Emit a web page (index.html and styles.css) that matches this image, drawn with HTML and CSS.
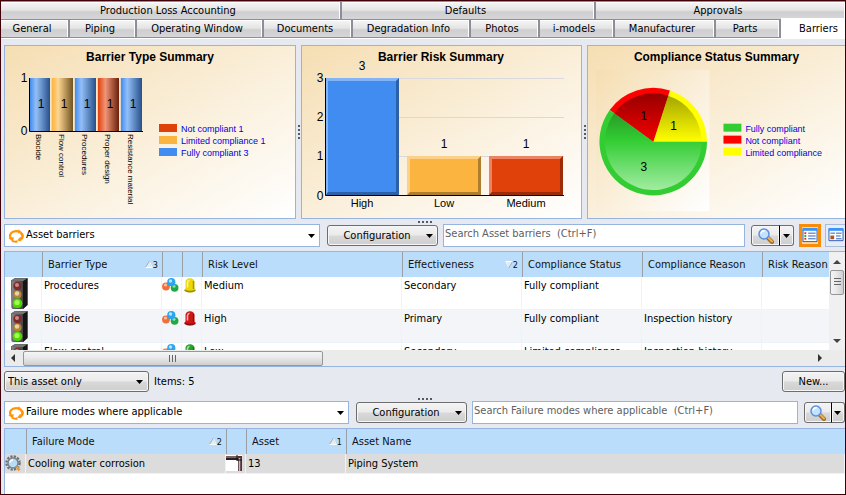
FILE: index.html
```html
<!DOCTYPE html>
<html lang="en">
<head>
<meta charset="utf-8">
<title>Asset barriers</title>
<link rel="stylesheet" href="styles.css">
</head>
<body>
<svg class="defs" aria-hidden="true">
  <defs>
    <linearGradient id="g-blue"><stop offset="0" stop-color="#418cf0"/><stop offset=".3" stop-color="#93bff7"/><stop offset="1" stop-color="#27508a"/></linearGradient>
    <linearGradient id="g-gold"><stop offset="0" stop-color="#fcb441"/><stop offset=".3" stop-color="#fdd593"/><stop offset="1" stop-color="#70531f"/></linearGradient>
    <linearGradient id="g-red"><stop offset="0" stop-color="#e0400a"/><stop offset=".35" stop-color="#f09577"/><stop offset="1" stop-color="#6a2008"/></linearGradient>
    <linearGradient id="g-area" x2="1" y2="1"><stop offset="0" stop-color="#f5deb3"/><stop offset="1" stop-color="#fff"/></linearGradient>
    <linearGradient id="p-red" x2="0" y2="1"><stop offset="0" stop-color="#960000"/><stop offset="1" stop-color="#f60000"/></linearGradient>
    <linearGradient id="p-yellow" x2="0" y2="1"><stop offset="0" stop-color="#a5a500"/><stop offset="1" stop-color="#ff0"/></linearGradient>
    <linearGradient id="p-green" x2="0" y2="1"><stop offset="0" stop-color="#289b28"/><stop offset=".35" stop-color="#32cd32"/><stop offset="1" stop-color="#a2eca2"/></linearGradient>
    <linearGradient id="g-case"><stop offset="0" stop-color="#8a8a8a"/><stop offset=".5" stop-color="#606060"/><stop offset="1" stop-color="#444"/></linearGradient>
    <symbol id="i-refresh" viewBox="0 0 16 14">
      <path d="M3 9.500C.500 5.500 3.500 2.200 8 2.200c1.500 0 2.500.300 3.500 1" fill="none" stroke="#ff9408" stroke-width="2.200"/>
      <path d="M12.200 3.500C15.800 6 15 9 12.500 10" fill="none" stroke="#ff9408" stroke-width="2.600"/>
      <path d="M13.500 12.500 9.200 11.500 12.300 7.800z" fill="#ff9408"/>
      <path d="M9.500 12.200C7.500 13 5.500 12.600 3.800 11.500" fill="none" stroke="#ff9408" stroke-width="2"/>
      <path d="M.300 9 5.800 8.300 5 12.800z" fill="#ff9408"/>
      <path d="M10.500 0v4.500l3-1.500z" fill="#ff9408"/>
    </symbol>
    <symbol id="i-arrow" viewBox="0 0 7 4"><path d="M0 0h7L3.500 4z"/></symbol>
    <symbol id="i-lens" viewBox="0 0 16 16">
      <path d="M9.500 9.500 14 14" stroke="#9b6a25" stroke-width="4" stroke-linecap="round"/>
      <path d="M9.800 9.300 14 13.500" stroke="#f0b050" stroke-width="2" stroke-linecap="round"/>
      <circle cx="6" cy="6" r="5" fill="#c3e2fc" stroke="#5b8fe0" stroke-width="1.500"/>
      <path d="M3 5.500A3.500 3.500 0 0 1 7 2.800" fill="none" stroke="#fff" stroke-width="1.500"/>
    </symbol>
    <symbol id="i-traffic" viewBox="0 0 17 31">
      <path d="M0 2.500 4 0h12.500v27L12 31H2L.500 30z" fill="#4a4a4a"/>
      <path d="M.500 3h11.500v27.500H1.500z" fill="url(#g-case)"/>
      <path d="M12 3 16.500 0v27L12 31z" fill="#151515"/>
      <path d="M0 2.800 4 .300h12.500L12 3z" fill="#777"/>
      <circle cx="6.500" cy="8" r="4.200" fill="#7e2a2a"/><circle cx="6" cy="7" r="2" fill="#c98a8a"/>
      <circle cx="6.500" cy="16.500" r="4" fill="#b3843c"/><circle cx="6" cy="15.500" r="2.200" fill="#ecd49c"/>
      <circle cx="6.500" cy="25.300" r="4.800" fill="#4fd800"/><circle cx="6" cy="24.500" r="2.600" fill="#9cff50"/>
    </symbol>
    <symbol id="i-balls" viewBox="0 0 17 15">
      <circle cx="4" cy="8.500" r="3.900" fill="#ee6f3a"/><circle cx="3.500" cy="7" r="1.600" fill="#ffc09a"/>
      <circle cx="12.600" cy="9.800" r="3.900" fill="#1ea848"/><circle cx="12" cy="8.300" r="1.500" fill="#8be0a0"/>
      <circle cx="9.300" cy="4.200" r="4.100" fill="#2ba5f0"/><circle cx="8.500" cy="3" r="1.700" fill="#b5e4ff"/>
    </symbol>
    <symbol id="i-lamp" viewBox="0 0 12 15">
      <path d="M1.500 10.500V3.500Q2 .500 6 .300q4 .200 4.500 3.200v7l1 1v1.500Q6 16 .500 13v-1.500z"/>
      <path d="M.500 11.500v1.500Q6 16 11.500 13v-1.500Q6 14 .500 11.500z" fill="#000" fill-opacity=".35"/>
      <path d="M3.500 9.500V4.500Q3.800 2.500 5.500 2.200" fill="none" stroke="#fff" stroke-opacity=".65" stroke-width="1.600"/>
      <path d="M9.500 3v8" fill="none" stroke="#000" stroke-opacity=".3" stroke-width="1.500"/>
    </symbol>
    <symbol id="i-gear" viewBox="0 0 17 17">
      <circle cx="8" cy="8" r="6.500" fill="none" stroke="#68727c" stroke-width="2.500" stroke-dasharray="2.200 1.200"/>
      <circle cx="8" cy="8" r="5" fill="#b9dcf5" stroke="#7c8690" stroke-width="1.500"/>
      <path d="M5 7.500A3 3 0 0 1 8 5" stroke="#fff" stroke-width="1.500" fill="none"/>
      <path d="m11.500 11.500 3 4" stroke="#e8973a" stroke-width="2.500"/>
    </symbol>
    <symbol id="i-pipe" viewBox="0 0 16 16">
      <path d="M0 0h16v16H0z" fill="#fff"/>
      <path d="M0 1h14v4H0z" fill="#2b2023"/><path d="M0 2h14" stroke="#c9a4a8"/>
      <path d="M12 1h4v15h-4z" fill="#4b3438"/><path d="M13.500 3v13" stroke="#d8b4b8" stroke-width="1.500"/>
      <path d="M11 0v6M11 5h5" stroke="#111"/>
    </symbol>
    <symbol id="i-sort" viewBox="0 0 8 7"><path d="M4 .500 7.500 6.500H.500z" fill="#e3edf5" stroke="#a5b0b8"/><path d="M.500 6.500h7L4.500 1" fill="none" stroke="#fff"/></symbol>
  </defs>
</svg>

<nav class="tabs">
  <div class="tab-row tab-row-upper">
    <button class="tab">Production Loss Accounting</button>
    <button class="tab">Defaults</button>
    <button class="tab">Approvals</button>
  </div>
  <div class="tab-row tab-row-lower">
    <button class="tab">General</button>
    <button class="tab">Piping</button>
    <button class="tab">Operating Window</button>
    <button class="tab">Documents</button>
    <button class="tab">Degradation Info</button>
    <button class="tab">Photos</button>
    <button class="tab">i-models</button>
    <button class="tab">Manufacturer</button>
    <button class="tab">Parts</button>
    <button class="tab tab-active">Barriers</button>
  </div>
</nav>

<main class="content">
  <section class="charts">
    <div class="panel">
      <svg class="chart" viewBox="0 0 290 172" role="img" aria-label="Barrier Type Summary">
        <text class="title" x="145" y="15">Barrier Type Summary</text>
        <path d="M46.500 32v53M69.500 32v53M92.500 32v53M115.500 32v53" stroke="#ddd8cc"/>
        <rect x="25" y="32" width="20" height="53" fill="url(#g-blue)"/>
        <rect x="47" y="32" width="21" height="53" fill="url(#g-gold)"/>
        <rect x="70" y="32" width="21" height="53" fill="url(#g-blue)"/>
        <rect x="93" y="32" width="21" height="53" fill="url(#g-red)"/>
        <rect x="116" y="32" width="21" height="53" fill="url(#g-blue)"/>
        <path class="axis" d="M24.500 32v53.500H138"/>
        <g class="num"><text x="19" y="36">1</text><text x="19" y="89">0</text>
          <text x="36" y="62">1</text><text x="59" y="62">1</text><text x="82" y="62">1</text><text x="105" y="62">1</text><text x="128" y="62">1</text></g>
        <g class="vert">
          <text transform="translate(31 88) rotate(90)">Biocide</text>
          <text transform="translate(54 88) rotate(90)">Flow control</text>
          <text transform="translate(77 88) rotate(90)">Procedures</text>
          <text transform="translate(100 88) rotate(90)">Proper design</text>
          <text transform="translate(123 88) rotate(90)">Resistance material</text>
        </g>
        <rect x="154" y="78" width="18" height="8" fill="#e0400a"/>
        <rect x="154" y="90" width="18" height="8" fill="#fcb441"/>
        <rect x="154" y="102" width="18" height="8" fill="#418cf0"/>
        <g class="legend"><text x="176" y="86">Not compliant 1</text><text x="176" y="98">Limited compliance 1</text><text x="176" y="110">Fully compliant 3</text></g>
      </svg>
    </div>
    <div class="split-v"><i class="grip grip-v"></i></div>
    <div class="panel">
      <svg class="chart" viewBox="0 0 279 172" role="img" aria-label="Barrier Risk Summary">
        <text class="title" x="139" y="15">Barrier Risk Summary</text>
        <path d="M24 32.500h238M24 71.500h238M24 110.500h238" stroke="#d9d9dd"/>
        <rect x="24" y="32" width="73" height="117" fill="#418cf0"/>
        <path d="M24 149V32h73l-3 3H26v111z" fill="#84b4f6"/><path d="M24 149l2-3h68V35l3-3v117z" fill="#2c61a8"/>
        <rect x="105" y="110" width="74" height="39" fill="#fcb441"/>
        <path d="M105 149v-39h74l-3 3h-68v33z" fill="#fdd08a"/><path d="M105 149l3-3h68v-33l3-3v39z" fill="#ae7d2e"/>
        <rect x="187" y="110" width="74" height="39" fill="#e0400a"/>
        <path d="M187 149v-39h74l-3 3h-68v33z" fill="#ec8464"/><path d="M187 149l3-3h68v-33l3-3v39z" fill="#9b2c07"/>
        <path class="axis" d="M23.500 32v117.500H262"/>
        <g class="num"><text x="18" y="36">3</text><text x="18" y="75">2</text><text x="18" y="114">1</text><text x="18" y="154">0</text>
          <text x="60" y="24">3</text><text x="142" y="102">1</text><text x="224" y="102">1</text></g>
        <g class="cat"><text x="60" y="161">High</text><text x="142" y="161">Low</text><text x="224" y="161">Medium</text></g>
      </svg>
    </div>
    <div class="split-v"><i class="grip grip-v"></i></div>
    <div class="panel panel-last">
      <svg class="chart" viewBox="0 0 258 172" role="img" aria-label="Compliance Status Summary">
        <text class="title" x="129" y="15">Compliance Status Summary</text>
        <rect x="8" y="24" width="114" height="142" fill="url(#g-area)"/>
        <path d="M65.500 96h54A54 54 0 0 0 82.200 44.600z" fill="#ff0"/>
        <path d="M65.500 96 82.200 44.600A54 54 0 0 0 21.800 64.300z" fill="red"/>
        <path d="M65.500 96 21.800 64.300A54 54 0 1 0 119.500 96z" fill="#32cd32"/>
        <path d="M65.500 96H114A48.500 48.500 0 0 0 80.500 49.900z" fill="url(#p-yellow)"/>
        <path d="M65.500 96 80.500 49.900A48.500 48.500 0 0 0 26.300 67.500z" fill="url(#p-red)"/>
        <path d="M65.500 96 26.300 67.500A48.500 48.500 0 1 0 114 96z" fill="url(#p-green)"/>
        <g class="num"><text x="56" y="74">1</text><text x="86" y="84">1</text><text x="56" y="125">3</text></g>
        <rect x="136" y="78" width="18" height="8" fill="#32cd32"/>
        <rect x="136" y="90" width="18" height="8" fill="red"/>
        <rect x="136" y="102" width="18" height="8" fill="#ff0"/>
        <g class="legend"><text x="158" y="86">Fully compliant</text><text x="158" y="98">Not compliant</text><text x="158" y="110">Limited compliance</text></g>
      </svg>
    </div>
  </section>

  <div class="split-h"><i class="grip"></i></div>

  <section class="toolbar toolbar-barriers">
    <div class="combo">
      <svg class="refresh"><use href="#i-refresh"/></svg>
      <select aria-label="View"><option>Asset barriers</option></select>
      <svg class="arrow"><use href="#i-arrow"/></svg>
    </div>
    <button class="btn config"><span>Configuration</span><svg class="arrow"><use href="#i-arrow"/></svg></button>
    <input class="search" type="search" aria-label="Search asset barriers" placeholder="Search Asset barriers  (Ctrl+F)">
    <div class="find">
      <button class="btn find-go" aria-label="Search"><svg class="lens"><use href="#i-lens"/></svg></button>
      <button class="btn find-more" aria-label="Search options"><svg class="arrow"><use href="#i-arrow"/></svg></button>
    </div>
    <div class="views">
      <button class="view view-on" aria-label="List view"><svg viewBox="0 0 16 16"><path d="M.500 1.500h15v13H.500z" fill="#fff" stroke="#2458b8"/><path d="M0 0h16v3H0z" fill="#3a94f5"/><path d="M6 5.500h8M6 8.500h8M6 11.500h8" stroke="#2458b8"/><path d="M2 4.500h2v2H2z" fill="#e03020"/><path d="M2 7.500h2v2H2z" fill="#20a040"/><path d="M2 10.500h2v2H2z" fill="#e03020"/></svg></button>
      <button class="view" aria-label="Card view"><svg viewBox="0 0 16 16"><path d="M.500 1.500h15v12H.500z" fill="#fff" stroke="#2458b8"/><path d="M0 0h16v3H0z" fill="#3a94f5"/><path d="M2 5.500h5M8 5.500h6M8 8.500h5M8 11.500h6" stroke="#2458b8"/><path d="M2 8h4v4H2z" fill="#a85a20"/></svg></button>
    </div>
  </section>

  <section class="grid-frame barriers-frame">
    <div class="viewport">
      <table class="barriers">
        <colgroup><col class="c-state"><col class="c-mid"><col class="c-icon"><col class="c-icon"><col class="c-wide"><col class="c-mid"><col class="c-mid"><col class="c-mid"><col class="c-mid"></colgroup>
        <thead><tr><th></th><th><span class="head">Barrier Type<span class="sort"><svg><use href="#i-sort"/></svg>3</span></span></th><th></th><th></th><th>Risk Level</th><th><span class="head">Effectiveness<span class="sort"><svg class="desc"><use href="#i-sort"/></svg>2</span></span></th><th>Compliance Status</th><th>Compliance Reason</th><th>Risk Reason</th></tr></thead>
        <tbody>
          <tr><td class="state"><svg class="traffic"><use href="#i-traffic"/></svg></td><td>Procedures</td><td class="ic"><svg class="balls"><use href="#i-balls"/></svg></td><td class="ic"><svg class="lamp lamp-yellow"><use href="#i-lamp"/></svg></td><td>Medium</td><td>Secondary</td><td>Fully compliant</td><td></td><td></td></tr>
          <tr><td class="state"><svg class="traffic"><use href="#i-traffic"/></svg></td><td>Biocide</td><td class="ic"><svg class="balls"><use href="#i-balls"/></svg></td><td class="ic"><svg class="lamp lamp-red"><use href="#i-lamp"/></svg></td><td>High</td><td>Primary</td><td>Fully compliant</td><td>Inspection history</td><td></td></tr>
          <tr><td class="state"><svg class="traffic"><use href="#i-traffic"/></svg></td><td>Flow control</td><td class="ic"><svg class="balls"><use href="#i-balls"/></svg></td><td class="ic"><svg class="lamp lamp-green"><use href="#i-lamp"/></svg></td><td>Low</td><td>Secondary</td><td>Limited compliance</td><td>Inspection history</td><td></td></tr>
        </tbody>
      </table>
    </div>
    <div class="vbar"><i class="tri tri-up"></i><div class="thumb-v"></div><i class="tri tri-down"></i></div>
    <div class="hbar"><i class="tri tri-left"></i><div class="thumb-h"></div><i class="tri tri-right"></i></div>
  </section>

  <section class="status">
    <label class="btn scope"><select aria-label="Scope"><option>This asset only</option></select><svg class="arrow"><use href="#i-arrow"/></svg></label>
    <span class="count">Items: 5</span>
    <button class="btn new">New...</button>
  </section>

  <div class="split-h"><i class="grip"></i></div>

  <section class="toolbar toolbar-modes">
    <div class="combo">
      <svg class="refresh"><use href="#i-refresh"/></svg>
      <select aria-label="View"><option>Failure modes where applicable</option></select>
      <svg class="arrow"><use href="#i-arrow"/></svg>
    </div>
    <button class="btn config"><span>Configuration</span><svg class="arrow"><use href="#i-arrow"/></svg></button>
    <input class="search" type="search" aria-label="Search failure modes" placeholder="Search Failure modes where applicable  (Ctrl+F)">
    <div class="find">
      <button class="btn find-go" aria-label="Search"><svg class="lens"><use href="#i-lens"/></svg></button>
      <button class="btn find-more" aria-label="Search options"><svg class="arrow"><use href="#i-arrow"/></svg></button>
    </div>
  </section>

  <section class="grid-frame modes-frame">
    <table class="modes">
      <colgroup><col class="c-gear"><col class="c-wide"><col class="c-icon"><col class="c-asset"><col></colgroup>
      <thead><tr><th></th><th><span class="head">Failure Mode<span class="sort"><svg><use href="#i-sort"/></svg>2</span></span></th><th></th><th><span class="head">Asset<span class="sort"><svg><use href="#i-sort"/></svg>1</span></span></th><th>Asset Name</th></tr></thead>
      <tbody><tr><td class="ic"><svg class="gear"><use href="#i-gear"/></svg></td><td>Cooling water corrosion</td><td class="ic"><svg class="pipe"><use href="#i-pipe"/></svg></td><td>13</td><td>Piping System</td></tr></tbody>
    </table>
  </section>
</main>
</body>
</html>
```
FILE: styles.css
```css
* { box-sizing: border-box; }

body {
  margin: 0;
  min-height: 100vh;
  display: flex;
  flex-direction: column;
  border: 1px solid #400008;
  background: #e6e9ef;
  color: #000;
  font: 11px/14px "DejaVu Sans Condensed", "Noto Sans", sans-serif;
  overflow: hidden;
}

button, input, select { font: inherit; color: inherit; margin: 0; }
svg { display: block; flex: none; }
.defs { position: absolute; width: 0; height: 0; }

/* Tabs */
.tabs { padding-top: 1px; background: #8d8e9a; border-bottom: 1px solid #fff; }
.tab-row { display: grid; column-gap: 2px; padding-bottom: 1px; }
.tab-row-upper { grid-template-columns: 339fr 252fr 249fr; }
.tab-row-lower { grid-template-columns: 67fr 65fr 125fr 87fr 116fr 67fr 73fr 99fr 63fr 64fr; }
.tab {
  min-width: 0;
  height: 17px;
  padding: 0 4px 0 0;
  border: 0;
  border-top: 1px solid #fff;
  border-right: 1px solid #fff;
  background: linear-gradient(#f4f4f4, #e4e4e5 45%, #cfcfd1 55%, #d6d6d8);
  line-height: 16px;
  white-space: nowrap;
}
.tab-active {
  height: 20px;
  margin: -2px 0 -1px;
  padding: 0 0 0 12px;
  background: #fff;
}

/* Page body */
.content { flex: 1; display: flex; flex-direction: column; padding: 6px 0 0 3px; }

.charts { display: grid; grid-template-columns: 292fr 5px 281fr 5px 258fr; }
.panel {
  min-width: 0;
  border: 1px solid #96b4e0;
  background: linear-gradient(150deg, #f5deb3, #fff);
}
.panel-last { border-right: 0; }
.chart { width: 100%; font-family: "Liberation Sans", sans-serif; }
.title { font-size: 12px; font-weight: bold; text-anchor: middle; }
.num { font-size: 12px; text-anchor: middle; }
.cat { font-size: 11px; text-anchor: middle; }
.vert { font-size: 8px; }
.legend { font-size: 9px; fill: #0000e0; }
.axis { fill: none; stroke: #000; }

.split-v, .split-h { display: flex; align-items: center; justify-content: center; }
.split-h { height: 5px; }
.grip { width: 14px; height: 2px; background: repeating-linear-gradient(90deg, #555a62 0 2px, transparent 2px 4px); }
.grip-v { width: 2px; height: 14px; background: repeating-linear-gradient(#555a62 0 2px, transparent 2px 4px); }

/* Toolbars */
.toolbar { display: grid; align-items: center; height: 23px; margin-bottom: 4px; column-gap: 5px; }
.toolbar-barriers { grid-template-columns: 316fr 113px 302fr 44px 46px; }
.toolbar-modes { grid-template-columns: 345fr 113px 326fr 42px; }
.combo {
  display: flex;
  align-items: center;
  height: 23px;
  padding: 0 4px 0 3px;
  border: 1px solid #96b4e0;
  background: #fff;
}
select { appearance: none; flex: 1; min-width: 0; padding: 0; border: 0; background: none; outline: 0; }
.combo select { padding: 0 0 2px 2px; }
.refresh { width: 16px; height: 14px; }
.arrow { width: 7px; height: 4px; }
.btn {
  display: flex;
  align-items: center;
  justify-content: center;
  height: 21px;
  padding: 0;
  border: 1px solid #6d6d6d;
  border-radius: 3px;
  background: linear-gradient(#f3f3f3, #ebebeb 48%, #d9d9d9 52%, #cecece);
  box-shadow: inset 0 0 0 1px #f6f6f6;
}
.config { margin-left: 2px; padding-right: 4px; }
.config span { flex: 1; text-align: center; }
.search {
  appearance: none;
  width: 100%;
  height: 23px;
  padding: 0 1px 4px;
  border: 1px solid #96b4e0;
  border-radius: 0;
  background: #fff;
}
.search::placeholder { color: #606060; white-space: pre; }
.find { display: flex; padding-left: 1px; }
.find-go { width: 29px; border-radius: 3px 0 0 3px; }
.find-more { width: 15px; border-left-color: #000; margin-left: -1px; border-radius: 0 3px 3px 0; }
.lens { width: 16px; height: 16px; }
.views { display: flex; gap: 4px; }
.view {
  flex: none;
  display: grid;
  place-items: center;
  width: 22px;
  height: 23px;
  padding: 0;
  border: 1px solid #a8bcdc;
  background: #e6edf8;
}
.view svg { width: 16px; height: 15px; }
.view-on { border: 3px solid #f88c08; background: #ffd9a0; }

/* Tables */
.grid-frame { border: 1px solid #96b4e0; border-right: 0; background: #fff; }
table { border-collapse: separate; border-spacing: 0; table-layout: fixed; }
th {
  height: 25px;
  padding: 0 4px 0 5px;
  border-left: 1px solid #9a9fa6;
  background: #bbddfc;
  color: #111;
  font-weight: normal;
  text-align: left;
  white-space: nowrap;
}
th:first-child { border-left: 0; }
td {
  padding: 2px 2px 0;
  border-right: 1px solid #edf3fb;
  border-bottom: 1px solid #edf3fb;
  vertical-align: top;
  white-space: nowrap;
}
td.ic { padding: 1px 0 0; }
.head { display: flex; justify-content: space-between; }
.sort { display: flex; align-items: center; font-size: 9px; }
.sort svg { width: 8px; height: 7px; }
.sort .desc { transform: rotate(180deg); }
.c-state { width: 37px; }
.c-mid { width: 120px; }
.c-icon { width: 20px; }
.c-wide { width: 200px; }
.c-gear { width: 21px; }
.c-asset { width: 100px; }

.barriers-frame { display: grid; grid-template-columns: 1fr 16px; margin-bottom: 3px; }
.viewport { height: 98px; overflow: hidden; }
.barriers { width: 877px; }
.barriers td { height: 33px; }
.barriers tbody tr:nth-child(even) td { background: #f3f5f8; }
td.state { padding: 1px 0 0 6px; }
.traffic { width: 17px; height: 31px; }
.balls { width: 17px; height: 15px; }
.lamp { width: 12px; height: 15px; margin-left: 2px; }
.lamp-yellow { fill: #ecd800; }
.lamp-red { fill: #d01414; }
.lamp-green { fill: #28a428; }

.vbar {
  display: flex;
  flex-direction: column;
  align-items: center;
  justify-content: space-between;
  padding: 8px 0 7px;
  background: #f0f0f0;
}
.thumb-v {
  width: 14px;
  height: 25px;
  margin: 6px 0 auto;
  border: 1px solid #979797;
  border-radius: 2px;
  background:
    repeating-linear-gradient(#666 0 1px, transparent 1px 3px) center / 7px 9px no-repeat,
    linear-gradient(90deg, #f5f5f5, #e9e9eb 45%, #cfcfcf);
}
.hbar {
  display: flex;
  align-items: center;
  grid-column: 1 / -1;
  height: 16px;
  padding: 0 23px 0 6px;
  background: #ebebeb;
}
.thumb-h {
  width: 37%;
  height: 15px;
  margin: 0 auto 0 8px;
  border: 1px solid #979797;
  border-radius: 2px;
  background:
    repeating-linear-gradient(90deg, #666 0 1px, transparent 1px 3px) center / 9px 7px no-repeat,
    linear-gradient(#f5f5f5, #e9e9eb 45%, #cfcfcf);
}
.tri { width: 0; height: 0; border: 4px solid transparent; }
.tri-up { border-width: 0 4px 4px; border-bottom-color: #444; }
.tri-down { border-width: 4px 4px 0; border-top-color: #444; }
.tri-left { border-width: 4px 4px 4px 0; border-right-color: #333; }
.tri-right { border-width: 4px 0 4px 4px; border-left-color: #333; }

/* Status line */
.status { display: flex; align-items: center; gap: 5px; height: 23px; margin-bottom: 3px; }
.scope { width: 145px; padding: 0 5px 0 3px; }
.new { width: 63px; margin-left: auto; }

.modes-frame { flex: 1; border-bottom: 0; }
.modes { width: 100%; }
.modes tbody td { height: 20px; padding-top: 3px; background: #dcdcdc; }
.modes tbody td.ic { padding-top: 1px; padding-left: 0; }
.gear { width: 17px; height: 17px; }
.pipe { width: 16px; height: 16px; }
```
